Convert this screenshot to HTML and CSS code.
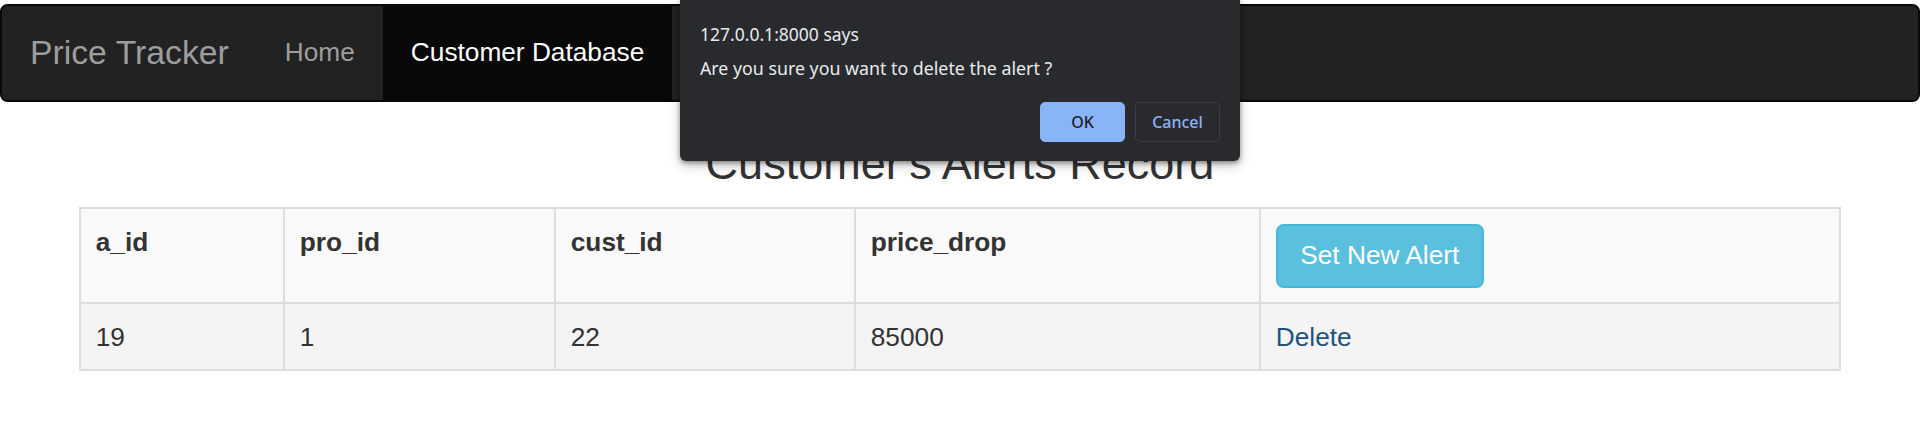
FILE: index.html
```html
<!DOCTYPE html>
<html lang="en">
<head>
<meta charset="utf-8">
<title>Customer Database</title>
<link rel="stylesheet" href="styles.css">
</head>
<body>
<nav class="navbar">
  <a class="brand" href="#">Price Tracker</a>
  <ul class="nav">
    <li><a href="#">Home</a></li>
    <li class="active"><a href="#">Customer Database</a></li>
  </ul>
</nav>
<main class="container">
  <h3 class="title">Customer's Alerts Record</h3>
  <table class="records">
    <colgroup>
      <col class="c1"><col class="c2"><col class="c3"><col class="c4"><col class="c5">
    </colgroup>
    <tr class="head-row">
      <th>a_id</th>
      <th>pro_id</th>
      <th>cust_id</th>
      <th>price_drop</th>
      <th><button class="btn-info" type="button">Set New Alert</button></th>
    </tr>
    <tr class="data-row">
      <td>19</td>
      <td>1</td>
      <td>22</td>
      <td>85000</td>
      <td><a class="link" href="#">Delete</a></td>
    </tr>
  </table>
</main>
<div class="dialog">
  <div class="dialog-title">127.0.0.1:8000 says</div>
  <div class="dialog-msg">Are you sure you want to delete the alert ?</div>
  <div class="dialog-actions">
    <button class="dbtn ok" type="button">OK</button>
    <button class="dbtn cancel" type="button">Cancel</button>
  </div>
</div>
</body>
</html>
```
FILE: styles.css
```css
* { box-sizing: border-box; }
html, body { margin: 0; }
body {
  font-family: "Liberation Sans", Arial, Helvetica, sans-serif;
  font-size: 26.25px;
  line-height: 1.42857;
  color: #333;
  background: #fff;
  padding-top: 4px;
  position: relative;
}
a { text-decoration: none; }

.navbar {
  display: flex;
  align-items: stretch;
  height: 97.5px;
  background: #222;
  border: 2px solid #080808;
  border-radius: 7.5px;
  margin: 0 0 37.5px;
  padding: 0 28px;
}
.brand {
  margin-left: -28px;
  padding: 28px 28px;
  font-size: 33.75px;
  line-height: 37.5px;
  color: #9d9d9d;
}
.nav {
  display: flex;
  list-style: none;
  margin: 0;
  padding: 0;
}
.nav a {
  display: block;
  padding: 28px 28px;
  line-height: 37.5px;
  color: #9d9d9d;
  height: 100%;
}
.nav .active a {
  background: #080808;
  color: #fff;
}

.container {
  width: 1818.75px;
  margin: 0 auto;
  padding: 0 28.125px;
}
.title {
  font-size: 45px;
  line-height: 1.1;
  font-weight: 400;
  text-align: center;
  margin: 37.5px 0 18.75px;
  color: #333;
}
.records {
  width: 100%;
  table-layout: fixed;
  border-collapse: collapse;
  border: 2px solid #ddd;
}
.c1 { width: 204px; }
.c2 { width: 271px; }
.c3 { width: 300px; }
.c4 { width: 405px; }
.records th, .records td {
  border: 2px solid #ddd;
  padding: 14.5px 15px;
  text-align: left;
  vertical-align: top;
  line-height: 37.5px;
}
.records td { padding-bottom: 13px; }
.records th { font-weight: 700; }
.head-row { background: #f9f9f9; }
.data-row { background: #f4f4f4; }
.btn-info {
  display: inline-block;
  font-family: inherit;
  font-size: 26.25px;
  line-height: 37.5px;
  padding: 11.25px 22.5px;
  color: #fff;
  background: #5bc0de;
  border: 2px solid #46b8da;
  border-radius: 7.5px;
  font-weight: 400;
}
.link { color: #23527c; }

.dialog {
  position: absolute;
  top: 0;
  left: 680px;
  width: 560px;
  height: 161px;
  background: #292a2d;
  border-radius: 0 0 6px 6px;
  box-shadow: 0 2px 4px rgba(0,0,0,.35), 0 4px 12px rgba(0,0,0,.25);
  padding: 23px 20px 19px;
  font-family: "Noto Sans", "Open Sans", sans-serif;
  color: #e8eaed;
  display: flex;
  flex-direction: column;
}
.dialog-title {
  font-size: 17.5px;
  line-height: 22px;
}
.dialog-msg {
  font-size: 17.8px;
  line-height: 22px;
  margin-top: 12px;
}
.dialog-actions {
  display: flex;
  justify-content: flex-end;
  gap: 10px;
  margin-top: 23px;
}
.dbtn {
  width: 85px;
  height: 40px;
  border-radius: 5px;
  font-family: inherit;
  font-size: 16px;
  font-weight: 500;
  padding: 0;
}
.ok {
  background: #8ab4f8;
  color: #202124;
  border: 1px solid #8ab4f8;
}
.cancel {
  background: transparent;
  color: #8ab4f8;
  border: 1px solid #3c4043;
}
```
